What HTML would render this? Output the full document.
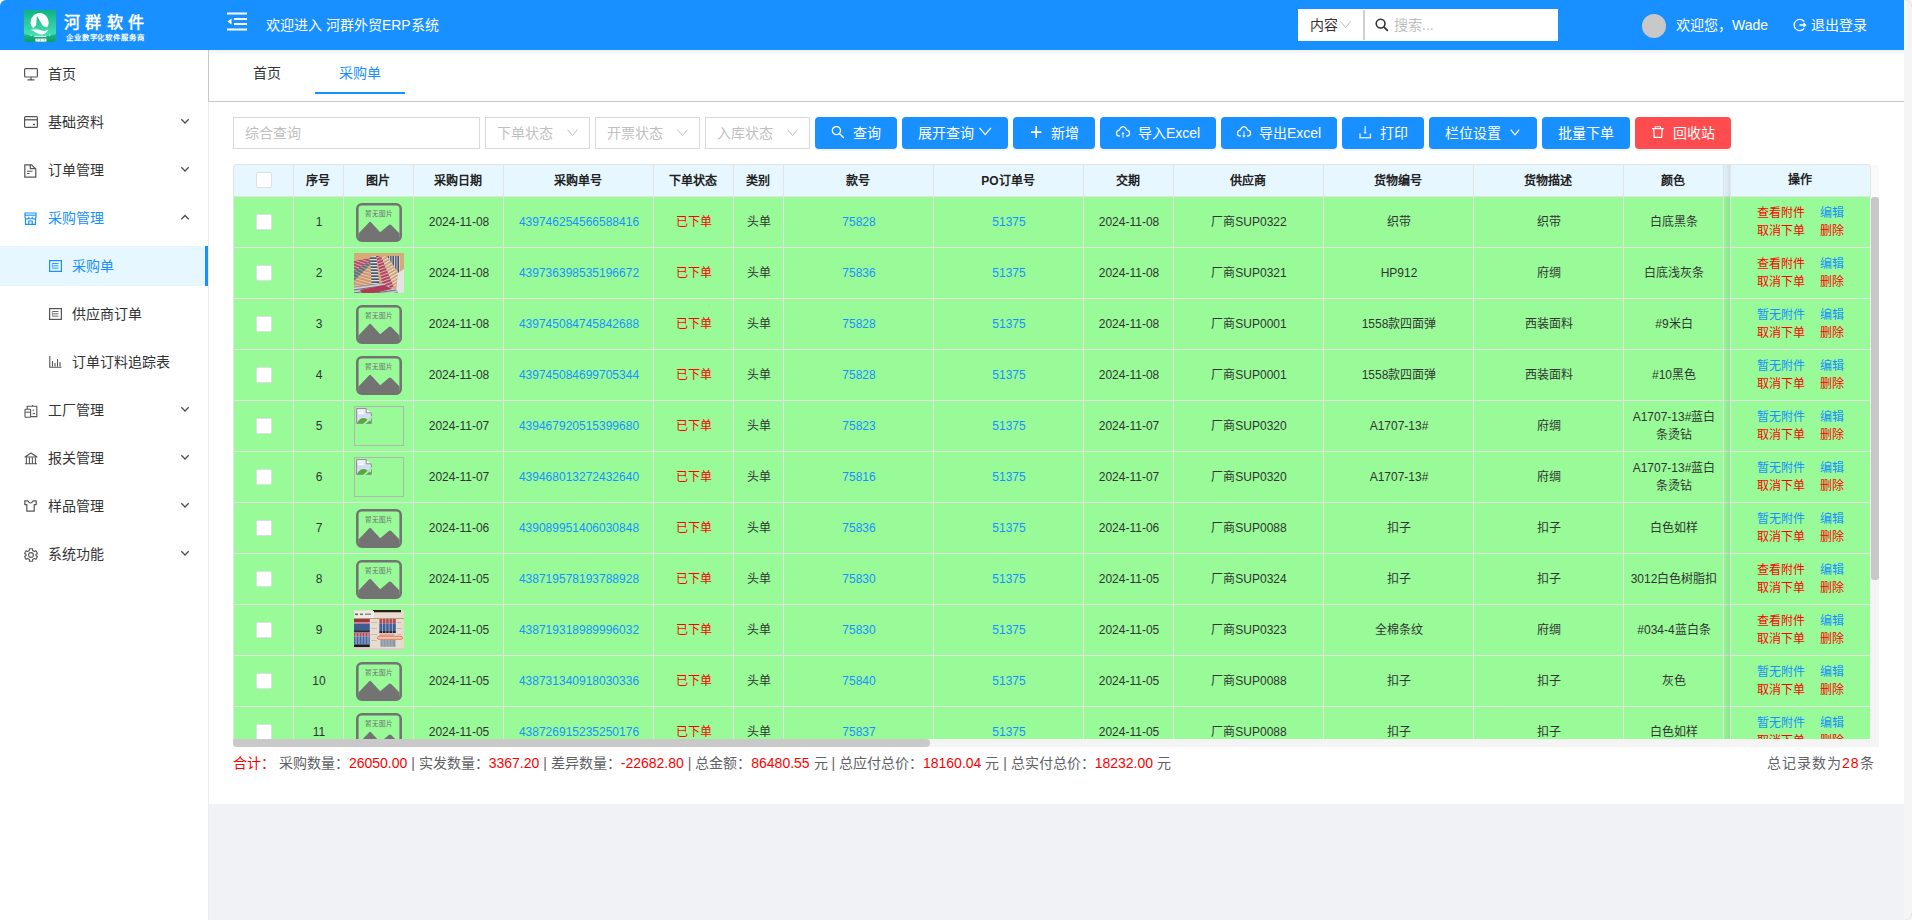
<!DOCTYPE html>
<html lang="zh-CN"><head><meta charset="utf-8"><style>
*{box-sizing:border-box;margin:0;padding:0}
html,body{width:1912px;height:920px;overflow:hidden}
body{position:relative;background:#f5f5f5;font-family:"Liberation Sans",sans-serif;color:#333;font-size:14px}
.a{position:absolute}
.nowrap{white-space:nowrap}
#hdr{left:0;top:0;width:1904px;height:50px;background:#1890ff;border-top-left-radius:6px}
#corner{left:0;top:0;width:8px;height:8px;background:#fdf7ea}
.ht{color:#fff;font-size:14px;line-height:20px;white-space:nowrap}
#side{left:0;top:50px;width:208px;height:870px;background:#fff}
.mi{position:absolute;left:0;width:208px;height:48px}
.mi .t{position:absolute;left:48px;top:14px;line-height:20px;font-size:14px;color:#333;white-space:nowrap}
.mi svg.ic{position:absolute;left:24px;top:18px}
.mi svg.ar{position:absolute;left:180px;top:20px}
#main{left:208px;top:50px;width:1696px;height:870px;background:#f0f2f5;border-left:1px solid #ebebf0}
#tabs{left:208px;top:50px;width:1696px;height:52px;background:#fff;border-left:1px solid #c8c8c8;border-bottom:1px solid #c8c8c8}
#card{left:209px;top:102px;width:1695px;height:702px;background:#fff}
.inp{position:absolute;top:117px;height:32px;border:1px solid #d9d9d9;background:#fff}
.ph{position:absolute;top:5px;left:11px;line-height:20px;font-size:14px;color:#bfbfbf;white-space:nowrap}
.btn{position:absolute;top:117px;height:32px;border-radius:4px;background:#1890ff;color:#fff;font-size:14px;line-height:20px;box-shadow:0 2px 0 rgba(0,0,0,.045)}
.btn .t{position:absolute;top:5.5px;white-space:nowrap}
.btn svg{position:absolute}
.cell{position:absolute;display:flex;align-items:center;justify-content:center;text-align:center;font-size:12px;line-height:18px;color:#333}
.hc{font-weight:bold;color:#222}
.lk{color:#1890ff}
.rd{color:#ff0000}
.vl{position:absolute;width:1px;background:#e3e3e3}
.hl{position:absolute;height:1px;background:#e3e3e3}
.cb{position:absolute;width:16px;height:16px;background:#fff;border:1px solid #dcdfe6;border-radius:2px}
</style></head><body>

<div class="a" id="corner"></div><div class="a" id="hdr"></div>
<div class="a" style="left:1904px;top:0;width:1px;height:50px;background:#fdfbf6"></div>
<svg class="a" style="left:1905px;top:0" width="7" height="920" viewBox="0 0 7 920"><path d="M0.5 0.5 Q6.5 1 6.8 7" fill="none" stroke="#e2e2e2" stroke-width="1"/><path d="M0.5 919.5 Q6.5 919 6.8 913" fill="none" stroke="#e2e2e2" stroke-width="1"/></svg>
<div class="a" style="left:24px;top:10px;width:32px;height:32px;border-radius:1.5px;overflow:hidden">
<svg width="32" height="32" viewBox="0 0 32 32" style="position:absolute;left:0;top:0">
<defs><linearGradient id="lg1" x1="0" y1="0" x2="0" y2="1"><stop offset="0" stop-color="#0fb282"/><stop offset="0.72" stop-color="#3edcb0"/></linearGradient>
<linearGradient id="lg2" x1="0" y1="0" x2="0" y2="1"><stop offset="0" stop-color="#1cb886"/><stop offset="1" stop-color="#0a9e6c"/></linearGradient></defs>
<rect width="32" height="32" fill="url(#lg1)"/>
<path d="M0 24 Q16 29 32 24 V32 H0 Z" fill="url(#lg2)"/>
<g transform="translate(-1.6,-1.2)"><path d="M16.3 4.2 A9.3 9.3 0 0 1 24.6 18.6 L20.5 17.2 L14.5 7 L13.8 16.2 L10.8 19.8 A9.3 9.3 0 0 1 16.3 4.2 Z" fill="#fff"/>
<path d="M8 21 Q14 19.5 19 21.8 Q23 23.2 26 20.5 Q24 26 18.5 25.6 Q14 25.2 11.5 22.5 Q10 21.5 8 21 Z" fill="#fff"/>
<circle cx="8.5" cy="26.3" r="0.6" fill="#fff"/><circle cx="27.3" cy="26.3" r="0.6" fill="#fff"/>
<rect x="12" y="27" width="12" height="1.1" fill="#fff"/><rect x="13" y="29.8" width="11" height="3" fill="#fff"/>
<path d="M14.5 30.5 H16 M18 30.5 V32 M21 31 H22.5" stroke="#0fa070" stroke-width="0.6"/></g>
</svg></div>
<div class="a nowrap" style="left:64px;top:13px;font-size:16px;line-height:20px;color:#fff;font-weight:bold;letter-spacing:5.4px">河群软件</div>
<div class="a nowrap" style="left:66px;top:33px;font-size:7.4px;line-height:10px;color:#fff;font-weight:bold;letter-spacing:0.85px">企业数字化软件服务商</div>
<svg class="a" style="left:227px;top:12px" width="20" height="19" viewBox="0 0 20 19">
<rect x="0" y="0.5" width="20" height="2" fill="#fff"/><rect x="7" y="6" width="13" height="2" fill="#fff"/>
<rect x="7" y="11" width="13" height="2" fill="#fff"/><rect x="0" y="16.5" width="20" height="2" fill="#fff"/>
<path d="M0.5 9.5 L4.5 6.5 V12.5Z" fill="#fff"/></svg>
<div class="a ht" style="left:266px;top:15px">欢迎进入 河群外贸ERP系统</div>
<div class="a" style="left:1298px;top:9px;width:260px;height:32px;background:#fff"></div>
<div class="a" style="left:1363px;top:10px;width:1.5px;height:30px;background:#d0d0d0"></div>
<div class="a nowrap" style="left:1310px;top:15px;font-size:14px;line-height:20px;color:#333">内容</div>
<svg class="a" style="left:1340px;top:21px" width="11" height="8" viewBox="0 0 11 8"><path d="M0.5 0.5 L5.5 6.5 L10.5 0.5" fill="none" stroke="#bbb" stroke-width="1"/></svg>
<svg class="a" style="left:1375px;top:18px" width="14" height="14" viewBox="0 0 14 14"><circle cx="5.6" cy="5.6" r="4.4" fill="none" stroke="#333" stroke-width="1.6"/><path d="M8.8 8.8 L12.8 12.8" stroke="#333" stroke-width="1.8"/></svg>
<div class="a nowrap" style="left:1394px;top:15px;font-size:14px;line-height:20px;color:#bdbdbd">搜索...</div>
<div class="a" style="left:1642px;top:14px;width:24px;height:24px;border-radius:50%;background:#c8c8c8"></div>
<div class="a ht" style="left:1676px;top:15px">欢迎您，Wade</div>
<svg class="a" style="left:1793px;top:18px" width="14" height="14" viewBox="0 0 14 14"><path d="M11.2 3.6 A5.6 5.6 0 1 0 11.2 10.4" fill="none" stroke="#fff" stroke-width="1.3"/><path d="M6.5 7 H12.5 M10.5 5 L12.5 7 L10.5 9" fill="none" stroke="#fff" stroke-width="1.3"/></svg>
<div class="a ht" style="left:1811px;top:15px">退出登录</div>
<div class="a" id="side"></div>
<div class="mi" style="top:50px"><svg class="ic" width="14" height="13" viewBox="0 0 14 13"><rect x="0.6" y="0.6" width="12.8" height="8.4" rx="1" fill="none" stroke="#555" stroke-width="1.2"/><path d="M7 9 V11.3 M3.5 11.8 H10.5" stroke="#555" stroke-width="1.2"/></svg><div class="t" style="color:#333">首页</div></div>
<div class="mi" style="top:98px"><svg class="ic" width="14" height="12" viewBox="0 0 14 12"><rect x="0.6" y="0.6" width="12.8" height="10.8" rx="1" fill="none" stroke="#555" stroke-width="1.2"/><path d="M0.6 3.8 H13.4" stroke="#555" stroke-width="1.3"/><path d="M9 8.5 H11" stroke="#555" stroke-width="1.3"/></svg><div class="t" style="color:#333">基础资料</div><svg class="ar" width="10" height="7" viewBox="0 0 10 7"><path d="M1.3 1.3 L5 5 L8.7 1.3" fill="none" stroke="#505050" stroke-width="1.4"/></svg></div>
<div class="mi" style="top:146px"><svg class="ic" width="13" height="14" viewBox="0 0 13 14"><path d="M0.8 0.8 H7.6 L11.8 5 V13.2 H0.8 Z" fill="none" stroke="#555" stroke-width="1.2"/><path d="M6.3 0.8 V4.6 H11.8" fill="none" stroke="#555" stroke-width="1.2"/><path d="M3 7.3 H8.5 M3 9.5 H5.5" stroke="#555" stroke-width="1.1"/></svg><div class="t" style="color:#333">订单管理</div><svg class="ar" width="10" height="7" viewBox="0 0 10 7"><path d="M1.3 1.3 L5 5 L8.7 1.3" fill="none" stroke="#505050" stroke-width="1.4"/></svg></div>
<div class="mi" style="top:194px"><svg class="ic" width="13" height="13" viewBox="0 0 13 13"><path d="M1 1 H12 V4.5 Q12 7 10 7 Q8.5 7 8.2 5.8 Q7.5 7 6.5 7 Q5.5 7 4.8 5.8 Q4.5 7 3 7 Q1 7 1 4.5 Z" fill="none" stroke="#1890ff" stroke-width="1.2"/><path d="M1 3.2 H12" stroke="#1890ff" stroke-width="1.1"/><path d="M1.5 7 V12.3 H11.5 V7 M4.8 12.3 V9 H8.2 V12.3" fill="none" stroke="#1890ff" stroke-width="1.2"/></svg><div class="t" style="color:#1890ff">采购管理</div><svg class="ar" width="10" height="7" viewBox="0 0 10 7"><path d="M1.3 5.2 L5 1.5 L8.7 5.2" fill="none" stroke="#505050" stroke-width="1.4"/></svg></div>
<div class="mi" style="top:386px"><svg class="ic" width="14" height="14" viewBox="0 0 14 14"><rect x="1" y="5.2" width="5.6" height="8" rx="0.6" fill="none" stroke="#555" stroke-width="1.1"/><path d="M1.5 8.2 H6" stroke="#555" stroke-width="1"/><path d="M3.2 5.2 V2.3 H12.8 V12.6 H6.6" fill="none" stroke="#555" stroke-width="1.1"/><path d="M8.6 1 V2.3" stroke="#555" stroke-width="1.1"/><circle cx="9" cy="6.3" r="0.6" fill="#555"/><path d="M9.8 5 L10.3 6.6 H9.3Z" fill="#555"/><path d="M8.7 9.8 Q10 8.4 11.2 9.8 Z" fill="#555" stroke="#555" stroke-width="0.6"/></svg><div class="t" style="color:#333">工厂管理</div><svg class="ar" width="10" height="7" viewBox="0 0 10 7"><path d="M1.3 1.3 L5 5 L8.7 1.3" fill="none" stroke="#505050" stroke-width="1.4"/></svg></div>
<div class="mi" style="top:434px"><svg class="ic" width="14" height="13" viewBox="0 0 14 13"><path d="M1 5 L7 1 L13 5 Z" fill="none" stroke="#555" stroke-width="1.1" stroke-linejoin="round"/><path d="M2.4 5.5 V11.6 M5.4 5.5 V11.6 M8.4 5.5 V11.6 M11.4 5.5 V11.6 M1 11.8 H13" stroke="#555" stroke-width="1.1"/></svg><div class="t" style="color:#333">报关管理</div><svg class="ar" width="10" height="7" viewBox="0 0 10 7"><path d="M1.3 1.3 L5 5 L8.7 1.3" fill="none" stroke="#505050" stroke-width="1.4"/></svg></div>
<div class="mi" style="top:482px"><svg class="ic" width="13" height="12" viewBox="0 0 13 12"><path d="M0.8 0.8 H3.8 Q5 3 6.5 3 Q8 3 9.2 0.8 H12.2 V4.6 H10.2 V11.2 H2.8 V4.6 H0.8 Z" fill="none" stroke="#555" stroke-width="1.2" stroke-linejoin="round"/></svg><div class="t" style="color:#333">样品管理</div><svg class="ar" width="10" height="7" viewBox="0 0 10 7"><path d="M1.3 1.3 L5 5 L8.7 1.3" fill="none" stroke="#505050" stroke-width="1.4"/></svg></div>
<div class="mi" style="top:530px"><svg class="ic" width="14" height="14" viewBox="0 0 14 14"><path d="M5.4 0.8 H8.6 V2.6 L10.4 3.6 L12 2.7 L13.4 5.5 L11.9 6.5 V7.5 L13.4 8.5 L12 11.3 L10.4 10.4 L8.6 11.4 V13.2 H5.4 V11.4 L3.6 10.4 L2 11.3 L0.6 8.5 L2.1 7.5 V6.5 L0.6 5.5 L2 2.7 L3.6 3.6 L5.4 2.6 Z" fill="none" stroke="#555" stroke-width="1.1" stroke-linejoin="round"/><circle cx="7" cy="7" r="2.4" fill="none" stroke="#555" stroke-width="1.1"/></svg><div class="t" style="color:#333">系统功能</div><svg class="ar" width="10" height="7" viewBox="0 0 10 7"><path d="M1.3 1.3 L5 5 L8.7 1.3" fill="none" stroke="#505050" stroke-width="1.4"/></svg></div>
<div class="a" style="left:0;top:246px;width:208px;height:40px;background:#e6f7ff"></div>
<div class="a" style="left:205px;top:246px;width:3px;height:40px;background:#1890ff"></div>
<div class="mi" style="top:242px"><svg class="ic" style="left:49px;top:18px" width="13" height="12" viewBox="0 0 13 12"><rect x="0.6" y="0.6" width="11.8" height="10.8" fill="none" stroke="#1890ff" stroke-width="1.2"/><path d="M3.5 3.5 H9.5 M3.5 5.8 H9.5 M3.5 8.1 H9.5" stroke="#1890ff" stroke-width="0.9"/><path d="M3.3 3 V8.5" stroke="#1890ff" stroke-width="0.6"/></svg><div class="t" style="left:72px;color:#1890ff">采购单</div></div>
<div class="mi" style="top:290px"><svg class="ic" style="left:49px;top:18px" width="13" height="12" viewBox="0 0 13 12"><rect x="0.6" y="0.6" width="11.8" height="10.8" fill="none" stroke="#555" stroke-width="1.2"/><path d="M3.5 3.5 H9.5 M3.5 5.8 H9.5 M3.5 8.1 H9.5" stroke="#555" stroke-width="0.9"/><path d="M3.3 3 V8.5" stroke="#555" stroke-width="0.6"/></svg><div class="t" style="left:72px;color:#333">供应商订单</div></div>
<div class="mi" style="top:338px"><svg class="ic" style="left:49px;top:18px" width="13" height="12" viewBox="0 0 13 12"><path d="M0.8 0 V11.2 H12.5" fill="none" stroke="#555" stroke-width="1.1"/><path d="M3.5 5 V10.5 M6 7 V10.5 M8.5 3 V10.5 M11 6 V10.5" stroke="#555" stroke-width="1.1"/></svg><div class="t" style="left:72px;color:#333">订单订料追踪表</div></div>
<div class="a" id="main"></div>
<div class="a" id="card"></div>
<div class="a" id="tabs"></div>
<div class="a" style="left:209px;top:50px;width:1695px;height:6px;background:linear-gradient(rgba(0,0,0,.045),rgba(0,0,0,0))"></div>
<div class="a ht" style="left:253px;top:63px;color:#333">首页</div>
<div class="a ht" style="left:339px;top:63px;color:#1890ff">采购单</div>
<div class="a" style="left:315px;top:92px;width:90px;height:2px;background:#1890ff"></div>
<div class="inp" style="left:233px;width:247px"><div class="ph">综合查询</div></div>
<div class="inp" style="left:485px;width:105px"><div class="ph">下单状态</div><svg style="position:absolute;left:81px;top:11px" width="11" height="8" viewBox="0 0 11 8"><path d="M0.6 0.6 L5.5 6.6 L10.4 0.6" fill="none" stroke="#bfbfbf" stroke-width="1"/></svg></div>
<div class="inp" style="left:595px;width:105px"><div class="ph">开票状态</div><svg style="position:absolute;left:81px;top:11px" width="11" height="8" viewBox="0 0 11 8"><path d="M0.6 0.6 L5.5 6.6 L10.4 0.6" fill="none" stroke="#bfbfbf" stroke-width="1"/></svg></div>
<div class="inp" style="left:705px;width:105px"><div class="ph">入库状态</div><svg style="position:absolute;left:81px;top:11px" width="11" height="8" viewBox="0 0 11 8"><path d="M0.6 0.6 L5.5 6.6 L10.4 0.6" fill="none" stroke="#bfbfbf" stroke-width="1"/></svg></div>
<div class="btn" style="left:815px;width:82px;background:#1890ff"><svg style="left:16px;top:9px" width="14" height="14" viewBox="0 0 14 14"><circle cx="5.4" cy="4.6" r="4.1" fill="none" stroke="#fff" stroke-width="1.3"/><path d="M8.4 7.6 L12.4 11.6" stroke="#fff" stroke-width="1.4" stroke-linecap="round"/></svg><span class="t" style="left:38px">查询</span></div>
<div class="btn" style="left:902px;width:106px;background:#1890ff"><svg style="left:76px;top:10px" width="14" height="9" viewBox="0 0 14 9"><path d="M1.5 0.9 L7.2 7.6 L12.9 0.9" fill="none" stroke="#fff" stroke-width="1.3"/></svg><span class="t" style="left:16px">展开查询</span></div>
<div class="btn" style="left:1013px;width:82px;background:#1890ff"><svg style="left:18px;top:9px" width="11" height="13" viewBox="0 0 11 13"><path d="M5.2 0 V12 M0 6.2 H10.4" stroke="#fff" stroke-width="1.7"/></svg><span class="t" style="left:38px">新增</span></div>
<div class="btn" style="left:1100px;width:116px;background:#1890ff"><svg style="left:16px;top:9px" width="15" height="13" viewBox="0 0 15 13"><path d="M3.4 10 Q0.4 10 0.5 7 Q0.7 4.6 3.1 4.2 Q4.8 0.6 7 0.6 Q9.2 0.6 10.9 4.2 Q13.5 4.6 13.5 7 Q13.6 10 10.6 10" fill="none" stroke="#fff" stroke-width="1.3" stroke-linecap="round"/><path d="M7 12 V6.6" stroke="#fff" stroke-opacity="0.65" stroke-width="1.5"/><path d="M5.3 7.9 L7 6.2 L8.7 7.9Z" fill="#fff"/></svg><span class="t" style="left:38px">导入Excel</span></div>
<div class="btn" style="left:1221px;width:116px;background:#1890ff"><svg style="left:16px;top:9px" width="15" height="13" viewBox="0 0 15 13"><path d="M3.4 10 Q0.4 10 0.5 7 Q0.7 4.6 3.1 4.2 Q4.8 0.6 7 0.6 Q9.2 0.6 10.9 4.2 Q13.5 4.6 13.5 7 Q13.6 10 10.6 10" fill="none" stroke="#fff" stroke-width="1.3" stroke-linecap="round"/><path d="M7 5.2 V10" stroke="#fff" stroke-opacity="0.65" stroke-width="1.5"/><path d="M5.2 9.6 L7 11.4 L8.8 9.6Z" fill="#fff"/></svg><span class="t" style="left:38px">导出Excel</span></div>
<div class="btn" style="left:1342px;width:82px;background:#1890ff"><svg style="left:17px;top:9px" width="13" height="13" viewBox="0 0 13 13"><path d="M1 7.6 V11.7 H11.4 V7.6" fill="none" stroke="#fff" stroke-opacity="0.8" stroke-width="1.5"/><path d="M6.2 0 V6.4" stroke="#fff" stroke-opacity="0.65" stroke-width="1.6"/><path d="M4.6 6.3 L6.2 7.9 L7.8 6.3Z" fill="#fff"/></svg><span class="t" style="left:38px">打印</span></div>
<div class="btn" style="left:1429px;width:108px;background:#1890ff"><svg style="left:81px;top:12px" width="10" height="7" viewBox="0 0 10 7"><path d="M0.7 0.7 L5 5.8 L9.3 0.7" fill="none" stroke="#fff" stroke-width="1.2"/></svg><span class="t" style="left:16px">栏位设置</span></div>
<div class="btn" style="left:1542px;width:88px;background:#1890ff"><span class="t" style="left:16px">批量下单</span></div>
<div class="btn" style="left:1635px;width:96px;background:#ff4d4f"><svg style="left:17px;top:9px" width="12" height="13" viewBox="0 0 12 13"><path d="M0 2.6 H11.8" stroke="#fff" stroke-width="1.2"/><path d="M3.2 2.4 V0.8 H8.6 V2.4" fill="none" stroke="#fff" stroke-width="1.1"/><path d="M1.6 2.8 L2.2 11.4 H9.6 L10.2 2.8" fill="none" stroke="#fff" stroke-width="1.3"/></svg><span class="t" style="left:38px">回收站</span></div>
<div class="a" style="left:233px;top:164px;width:1638px;height:33px;background:#e6f7ff;border-top:1px solid #e3e3e3;border-left:1px solid #e3e3e3;border-right:1px solid #e3e3e3;border-radius:4px 4px 0 0"></div>
<div class="a" style="left:1871px;top:165px;width:8px;height:32px;background:#fafafa"></div>
<div class="a" style="left:233px;top:197px;width:1637px;height:542px;background:#98fb98;overflow:hidden" id="tb"></div>
<div class="vl" style="left:293px;top:165px;height:574px"></div>
<div class="vl" style="left:343px;top:165px;height:574px"></div>
<div class="vl" style="left:413px;top:165px;height:574px"></div>
<div class="vl" style="left:503px;top:165px;height:574px"></div>
<div class="vl" style="left:653px;top:165px;height:574px"></div>
<div class="vl" style="left:733px;top:165px;height:574px"></div>
<div class="vl" style="left:783px;top:165px;height:574px"></div>
<div class="vl" style="left:933px;top:165px;height:574px"></div>
<div class="vl" style="left:1083px;top:165px;height:574px"></div>
<div class="vl" style="left:1173px;top:165px;height:574px"></div>
<div class="vl" style="left:1323px;top:165px;height:574px"></div>
<div class="vl" style="left:1473px;top:165px;height:574px"></div>
<div class="vl" style="left:1623px;top:165px;height:574px"></div>
<div class="vl" style="left:1723px;top:165px;height:574px"></div>
<div class="vl" style="left:233px;top:168px;height:571px"></div>
<div class="hl" style="left:233px;top:196px;width:1637px"></div>
<div class="hl" style="left:233px;top:247px;width:1637px"></div>
<div class="hl" style="left:233px;top:298px;width:1637px"></div>
<div class="hl" style="left:233px;top:349px;width:1637px"></div>
<div class="hl" style="left:233px;top:400px;width:1637px"></div>
<div class="hl" style="left:233px;top:451px;width:1637px"></div>
<div class="hl" style="left:233px;top:502px;width:1637px"></div>
<div class="hl" style="left:233px;top:553px;width:1637px"></div>
<div class="hl" style="left:233px;top:604px;width:1637px"></div>
<div class="hl" style="left:233px;top:655px;width:1637px"></div>
<div class="hl" style="left:233px;top:706px;width:1637px"></div>
<div class="cell hc" style="left:293px;top:165px;width:50px;height:32px">序号</div>
<div class="cell hc" style="left:343px;top:165px;width:70px;height:32px">图片</div>
<div class="cell hc" style="left:413px;top:165px;width:90px;height:32px">采购日期</div>
<div class="cell hc" style="left:503px;top:165px;width:150px;height:32px">采购单号</div>
<div class="cell hc" style="left:653px;top:165px;width:80px;height:32px">下单状态</div>
<div class="cell hc" style="left:733px;top:165px;width:50px;height:32px">类别</div>
<div class="cell hc" style="left:783px;top:165px;width:150px;height:32px">款号</div>
<div class="cell hc" style="left:933px;top:165px;width:150px;height:32px">PO订单号</div>
<div class="cell hc" style="left:1083px;top:165px;width:90px;height:32px">交期</div>
<div class="cell hc" style="left:1173px;top:165px;width:150px;height:32px">供应商</div>
<div class="cell hc" style="left:1323px;top:165px;width:150px;height:32px">货物编号</div>
<div class="cell hc" style="left:1473px;top:165px;width:150px;height:32px">货物描述</div>
<div class="cell hc" style="left:1623px;top:165px;width:100px;height:32px">颜色</div>
<div class="cb" style="left:256px;top:172px"></div>
<div class="a" style="left:0;top:0;width:1912px;height:739px;overflow:hidden"><div class="cb" style="left:256px;top:214px"></div><div class="cell " style="left:294px;top:197px;width:50px;height:50px">1</div><div class="a" style="left:356px;top:203px;width:46px;height:39px"><svg width="46" height="39" viewBox="0 0 46 39"><rect x="1.3" y="1.3" width="43.4" height="36.4" rx="4.5" fill="none" stroke="#737373" stroke-width="2.6"/><path d="M2.5 30.5 L13 19.4 Q14.1 18.1 15.2 19.4 L24.2 29.2 L32.8 22 Q34 21 35.2 22.1 L43.5 30.5 V35 Q43.5 37.7 40.8 37.7 H5.2 Q2.5 37.7 2.5 35 Z" fill="#737373"/><text x="23" y="13" font-size="6.5" text-anchor="middle" fill="#707070" font-family="Liberation Sans, sans-serif">暂无图片</text></svg></div><div class="cell " style="left:414px;top:197px;width:90px;height:50px">2024-11-08</div><div class="cell lk" style="left:504px;top:197px;width:150px;height:50px">439746254566588416</div><div class="cell rd" style="left:654px;top:197px;width:80px;height:50px">已下单</div><div class="cell " style="left:734px;top:197px;width:50px;height:50px">头单</div><div class="cell lk" style="left:784px;top:197px;width:150px;height:50px">75828</div><div class="cell lk" style="left:934px;top:197px;width:150px;height:50px">51375</div><div class="cell " style="left:1084px;top:197px;width:90px;height:50px">2024-11-08</div><div class="cell " style="left:1174px;top:197px;width:150px;height:50px">厂商SUP0322</div><div class="cell " style="left:1324px;top:197px;width:150px;height:50px">织带</div><div class="cell " style="left:1474px;top:197px;width:150px;height:50px">织带</div><div class="cell " style="left:1624px;top:197px;width:100px;height:50px">白底黑条</div><div class="a" style="left:1757px;top:204px;line-height:18px;font-size:12px;white-space:nowrap"><span class="rd">查看附件</span><br><span class="rd">取消下单</span></div><div class="a" style="left:1820px;top:204px;line-height:18px;font-size:12px;white-space:nowrap"><span class="lk">编辑</span><br><span class="rd">删除</span></div><div class="cb" style="left:256px;top:265px"></div><div class="cell " style="left:294px;top:248px;width:50px;height:50px">2</div><div class="a" style="left:354px;top:253px;width:50px;height:40px"><svg width="50" height="40" viewBox="0 0 50 40"><defs>
<pattern id="sR" width="3" height="3" patternUnits="userSpaceOnUse" patternTransform="rotate(20)"><rect width="3" height="3" fill="#b24d66"/><rect width="3" height="1" fill="#dba8b2"/></pattern>
<pattern id="sG" width="3" height="3" patternUnits="userSpaceOnUse" patternTransform="rotate(25)"><rect width="3" height="3" fill="#5f6a70"/><rect width="3" height="1.2" fill="#9aa2a4"/></pattern>
<pattern id="sT" width="3" height="3" patternUnits="userSpaceOnUse" patternTransform="rotate(15)"><rect width="3" height="3" fill="#c9916c"/><rect width="3" height="1.2" fill="#e8c9a8"/></pattern>
<pattern id="sN" width="3" height="3" patternUnits="userSpaceOnUse"><rect width="3" height="3" fill="#4e5668"/><rect width="3" height="1.3" fill="#e0e0e0"/></pattern>
<pattern id="sW" width="3" height="3" patternUnits="userSpaceOnUse" patternTransform="rotate(-20)"><rect width="3" height="3" fill="#b0445e"/><rect width="3" height="1" fill="#e0b0bc"/></pattern>
<pattern id="sB" width="3" height="3" patternUnits="userSpaceOnUse" patternTransform="rotate(-30)"><rect width="3" height="3" fill="#c49a72"/><rect width="3" height="1.3" fill="#f2e2cc"/></pattern>
<pattern id="sP" width="3" height="3" patternUnits="userSpaceOnUse" patternTransform="rotate(-8)"><rect width="3" height="3" fill="#d6d4d6"/><rect width="3" height="1.2" fill="#6a707c"/></pattern>
<pattern id="sV" width="2.5" height="3" patternUnits="userSpaceOnUse"><rect width="2.5" height="3" fill="#4a5064"/><rect width="1" height="3" fill="#d8d8dc"/></pattern>
</defs><filter id="bl1"><feGaussianBlur stdDeviation="0.45"/></filter><g filter="url(#bl1)"><rect x="-2" y="-2" width="54" height="44" fill="#d7ab78"/>
<path d="M25 3 L0 8 L0 22 Z" fill="url(#sR)"/><path d="M25 3 L0 18 L0 32 Z" fill="url(#sG)"/>
<path d="M25 3 L0 28 L2 36 L20 36 Z" fill="url(#sT)"/><path d="M16 4 L22 3 L26 36 L18 36 Z" fill="url(#sN)"/>
<path d="M22 3 L27 3 L40 34 L30 38 Z" fill="url(#sW)"/><path d="M27 3 L34 4 L48 26 L40 34 Z" fill="url(#sB)"/>
<path d="M33 3 L46 3 L46 22 Z" fill="url(#sV)"/><path d="M44 20 L50 16 L50 40 L42 40 Z" fill="#e4e2e4"/>
<path d="M0 34 L28 30 L44 38 L44 40 L0 40 Z" fill="url(#sP)"/><path d="M6 37 L30 32 L38 36 L20 40 L8 40 Z" fill="#b03a56"/></g>
</svg></div><div class="cell " style="left:414px;top:248px;width:90px;height:50px">2024-11-08</div><div class="cell lk" style="left:504px;top:248px;width:150px;height:50px">439736398535196672</div><div class="cell rd" style="left:654px;top:248px;width:80px;height:50px">已下单</div><div class="cell " style="left:734px;top:248px;width:50px;height:50px">头单</div><div class="cell lk" style="left:784px;top:248px;width:150px;height:50px">75836</div><div class="cell lk" style="left:934px;top:248px;width:150px;height:50px">51375</div><div class="cell " style="left:1084px;top:248px;width:90px;height:50px">2024-11-08</div><div class="cell " style="left:1174px;top:248px;width:150px;height:50px">厂商SUP0321</div><div class="cell " style="left:1324px;top:248px;width:150px;height:50px">HP912</div><div class="cell " style="left:1474px;top:248px;width:150px;height:50px">府绸</div><div class="cell " style="left:1624px;top:248px;width:100px;height:50px">白底浅灰条</div><div class="a" style="left:1757px;top:255px;line-height:18px;font-size:12px;white-space:nowrap"><span class="rd">查看附件</span><br><span class="rd">取消下单</span></div><div class="a" style="left:1820px;top:255px;line-height:18px;font-size:12px;white-space:nowrap"><span class="lk">编辑</span><br><span class="rd">删除</span></div><div class="cb" style="left:256px;top:316px"></div><div class="cell " style="left:294px;top:299px;width:50px;height:50px">3</div><div class="a" style="left:356px;top:305px;width:46px;height:39px"><svg width="46" height="39" viewBox="0 0 46 39"><rect x="1.3" y="1.3" width="43.4" height="36.4" rx="4.5" fill="none" stroke="#737373" stroke-width="2.6"/><path d="M2.5 30.5 L13 19.4 Q14.1 18.1 15.2 19.4 L24.2 29.2 L32.8 22 Q34 21 35.2 22.1 L43.5 30.5 V35 Q43.5 37.7 40.8 37.7 H5.2 Q2.5 37.7 2.5 35 Z" fill="#737373"/><text x="23" y="13" font-size="6.5" text-anchor="middle" fill="#707070" font-family="Liberation Sans, sans-serif">暂无图片</text></svg></div><div class="cell " style="left:414px;top:299px;width:90px;height:50px">2024-11-08</div><div class="cell lk" style="left:504px;top:299px;width:150px;height:50px">439745084745842688</div><div class="cell rd" style="left:654px;top:299px;width:80px;height:50px">已下单</div><div class="cell " style="left:734px;top:299px;width:50px;height:50px">头单</div><div class="cell lk" style="left:784px;top:299px;width:150px;height:50px">75828</div><div class="cell lk" style="left:934px;top:299px;width:150px;height:50px">51375</div><div class="cell " style="left:1084px;top:299px;width:90px;height:50px">2024-11-08</div><div class="cell " style="left:1174px;top:299px;width:150px;height:50px">厂商SUP0001</div><div class="cell " style="left:1324px;top:299px;width:150px;height:50px">1558款四面弹</div><div class="cell " style="left:1474px;top:299px;width:150px;height:50px">西装面料</div><div class="cell " style="left:1624px;top:299px;width:100px;height:50px">#9米白</div><div class="a" style="left:1757px;top:306px;line-height:18px;font-size:12px;white-space:nowrap"><span class="lk">暂无附件</span><br><span class="rd">取消下单</span></div><div class="a" style="left:1820px;top:306px;line-height:18px;font-size:12px;white-space:nowrap"><span class="lk">编辑</span><br><span class="rd">删除</span></div><div class="cb" style="left:256px;top:367px"></div><div class="cell " style="left:294px;top:350px;width:50px;height:50px">4</div><div class="a" style="left:356px;top:356px;width:46px;height:39px"><svg width="46" height="39" viewBox="0 0 46 39"><rect x="1.3" y="1.3" width="43.4" height="36.4" rx="4.5" fill="none" stroke="#737373" stroke-width="2.6"/><path d="M2.5 30.5 L13 19.4 Q14.1 18.1 15.2 19.4 L24.2 29.2 L32.8 22 Q34 21 35.2 22.1 L43.5 30.5 V35 Q43.5 37.7 40.8 37.7 H5.2 Q2.5 37.7 2.5 35 Z" fill="#737373"/><text x="23" y="13" font-size="6.5" text-anchor="middle" fill="#707070" font-family="Liberation Sans, sans-serif">暂无图片</text></svg></div><div class="cell " style="left:414px;top:350px;width:90px;height:50px">2024-11-08</div><div class="cell lk" style="left:504px;top:350px;width:150px;height:50px">439745084699705344</div><div class="cell rd" style="left:654px;top:350px;width:80px;height:50px">已下单</div><div class="cell " style="left:734px;top:350px;width:50px;height:50px">头单</div><div class="cell lk" style="left:784px;top:350px;width:150px;height:50px">75828</div><div class="cell lk" style="left:934px;top:350px;width:150px;height:50px">51375</div><div class="cell " style="left:1084px;top:350px;width:90px;height:50px">2024-11-08</div><div class="cell " style="left:1174px;top:350px;width:150px;height:50px">厂商SUP0001</div><div class="cell " style="left:1324px;top:350px;width:150px;height:50px">1558款四面弹</div><div class="cell " style="left:1474px;top:350px;width:150px;height:50px">西装面料</div><div class="cell " style="left:1624px;top:350px;width:100px;height:50px">#10黑色</div><div class="a" style="left:1757px;top:357px;line-height:18px;font-size:12px;white-space:nowrap"><span class="lk">暂无附件</span><br><span class="rd">取消下单</span></div><div class="a" style="left:1820px;top:357px;line-height:18px;font-size:12px;white-space:nowrap"><span class="lk">编辑</span><br><span class="rd">删除</span></div><div class="cb" style="left:256px;top:418px"></div><div class="cell " style="left:294px;top:401px;width:50px;height:50px">5</div><div class="a" style="left:354px;top:406px;width:50px;height:40px;border:1px solid #b4b4b4"><svg width="17" height="17" viewBox="0 0 17 17" style="position:absolute;left:1px;top:1px"><defs><linearGradient id="bg1" x1="0" y1="0" x2="0" y2="1"><stop offset="0" stop-color="#f4f7fd"/><stop offset="0.5" stop-color="#cfdcf4"/><stop offset="1" stop-color="#dfe6f8"/></linearGradient></defs><path d="M0.6 0.6 H10.2 L15.4 5.8 V15.4 H0.6 Z" fill="url(#bg1)" stroke="#8a8a8a" stroke-width="1"/><path d="M10.2 0.6 V4.8 H15.4" fill="#fff" stroke="#8a8a8a" stroke-width="1"/><path d="M2.2 6 Q2.6 4.6 4.2 4.8 Q5.2 3.4 6.8 4.2 Q7.6 4.6 7.8 6 Z" fill="#fff"/><path d="M1 15 Q3.6 10 7.6 10 Q10.4 10.2 11.8 12 L9 15 Z" fill="#5aa83a"/><path d="M10.6 15 L13.8 12.2 Q14.6 13.2 15 14.2 V15 Z" fill="#5aa83a"/><path d="M7.8 16.4 L16.4 8.4" stroke="#98fb98" stroke-width="1.6"/></svg></div><div class="cell " style="left:414px;top:401px;width:90px;height:50px">2024-11-07</div><div class="cell lk" style="left:504px;top:401px;width:150px;height:50px">439467920515399680</div><div class="cell rd" style="left:654px;top:401px;width:80px;height:50px">已下单</div><div class="cell " style="left:734px;top:401px;width:50px;height:50px">头单</div><div class="cell lk" style="left:784px;top:401px;width:150px;height:50px">75823</div><div class="cell lk" style="left:934px;top:401px;width:150px;height:50px">51375</div><div class="cell " style="left:1084px;top:401px;width:90px;height:50px">2024-11-07</div><div class="cell " style="left:1174px;top:401px;width:150px;height:50px">厂商SUP0320</div><div class="cell " style="left:1324px;top:401px;width:150px;height:50px">A1707-13#</div><div class="cell " style="left:1474px;top:401px;width:150px;height:50px">府绸</div><div class="cell " style="left:1624px;top:401px;width:100px;height:50px">A1707-13#蓝白<br>条烫钻</div><div class="a" style="left:1757px;top:408px;line-height:18px;font-size:12px;white-space:nowrap"><span class="lk">暂无附件</span><br><span class="rd">取消下单</span></div><div class="a" style="left:1820px;top:408px;line-height:18px;font-size:12px;white-space:nowrap"><span class="lk">编辑</span><br><span class="rd">删除</span></div><div class="cb" style="left:256px;top:469px"></div><div class="cell " style="left:294px;top:452px;width:50px;height:50px">6</div><div class="a" style="left:354px;top:457px;width:50px;height:40px;border:1px solid #b4b4b4"><svg width="17" height="17" viewBox="0 0 17 17" style="position:absolute;left:1px;top:1px"><defs><linearGradient id="bg1" x1="0" y1="0" x2="0" y2="1"><stop offset="0" stop-color="#f4f7fd"/><stop offset="0.5" stop-color="#cfdcf4"/><stop offset="1" stop-color="#dfe6f8"/></linearGradient></defs><path d="M0.6 0.6 H10.2 L15.4 5.8 V15.4 H0.6 Z" fill="url(#bg1)" stroke="#8a8a8a" stroke-width="1"/><path d="M10.2 0.6 V4.8 H15.4" fill="#fff" stroke="#8a8a8a" stroke-width="1"/><path d="M2.2 6 Q2.6 4.6 4.2 4.8 Q5.2 3.4 6.8 4.2 Q7.6 4.6 7.8 6 Z" fill="#fff"/><path d="M1 15 Q3.6 10 7.6 10 Q10.4 10.2 11.8 12 L9 15 Z" fill="#5aa83a"/><path d="M10.6 15 L13.8 12.2 Q14.6 13.2 15 14.2 V15 Z" fill="#5aa83a"/><path d="M7.8 16.4 L16.4 8.4" stroke="#98fb98" stroke-width="1.6"/></svg></div><div class="cell " style="left:414px;top:452px;width:90px;height:50px">2024-11-07</div><div class="cell lk" style="left:504px;top:452px;width:150px;height:50px">439468013272432640</div><div class="cell rd" style="left:654px;top:452px;width:80px;height:50px">已下单</div><div class="cell " style="left:734px;top:452px;width:50px;height:50px">头单</div><div class="cell lk" style="left:784px;top:452px;width:150px;height:50px">75816</div><div class="cell lk" style="left:934px;top:452px;width:150px;height:50px">51375</div><div class="cell " style="left:1084px;top:452px;width:90px;height:50px">2024-11-07</div><div class="cell " style="left:1174px;top:452px;width:150px;height:50px">厂商SUP0320</div><div class="cell " style="left:1324px;top:452px;width:150px;height:50px">A1707-13#</div><div class="cell " style="left:1474px;top:452px;width:150px;height:50px">府绸</div><div class="cell " style="left:1624px;top:452px;width:100px;height:50px">A1707-13#蓝白<br>条烫钻</div><div class="a" style="left:1757px;top:459px;line-height:18px;font-size:12px;white-space:nowrap"><span class="lk">暂无附件</span><br><span class="rd">取消下单</span></div><div class="a" style="left:1820px;top:459px;line-height:18px;font-size:12px;white-space:nowrap"><span class="lk">编辑</span><br><span class="rd">删除</span></div><div class="cb" style="left:256px;top:520px"></div><div class="cell " style="left:294px;top:503px;width:50px;height:50px">7</div><div class="a" style="left:356px;top:509px;width:46px;height:39px"><svg width="46" height="39" viewBox="0 0 46 39"><rect x="1.3" y="1.3" width="43.4" height="36.4" rx="4.5" fill="none" stroke="#737373" stroke-width="2.6"/><path d="M2.5 30.5 L13 19.4 Q14.1 18.1 15.2 19.4 L24.2 29.2 L32.8 22 Q34 21 35.2 22.1 L43.5 30.5 V35 Q43.5 37.7 40.8 37.7 H5.2 Q2.5 37.7 2.5 35 Z" fill="#737373"/><text x="23" y="13" font-size="6.5" text-anchor="middle" fill="#707070" font-family="Liberation Sans, sans-serif">暂无图片</text></svg></div><div class="cell " style="left:414px;top:503px;width:90px;height:50px">2024-11-06</div><div class="cell lk" style="left:504px;top:503px;width:150px;height:50px">439089951406030848</div><div class="cell rd" style="left:654px;top:503px;width:80px;height:50px">已下单</div><div class="cell " style="left:734px;top:503px;width:50px;height:50px">头单</div><div class="cell lk" style="left:784px;top:503px;width:150px;height:50px">75836</div><div class="cell lk" style="left:934px;top:503px;width:150px;height:50px">51375</div><div class="cell " style="left:1084px;top:503px;width:90px;height:50px">2024-11-06</div><div class="cell " style="left:1174px;top:503px;width:150px;height:50px">厂商SUP0088</div><div class="cell " style="left:1324px;top:503px;width:150px;height:50px">扣子</div><div class="cell " style="left:1474px;top:503px;width:150px;height:50px">扣子</div><div class="cell " style="left:1624px;top:503px;width:100px;height:50px">白色如样</div><div class="a" style="left:1757px;top:510px;line-height:18px;font-size:12px;white-space:nowrap"><span class="lk">暂无附件</span><br><span class="rd">取消下单</span></div><div class="a" style="left:1820px;top:510px;line-height:18px;font-size:12px;white-space:nowrap"><span class="lk">编辑</span><br><span class="rd">删除</span></div><div class="cb" style="left:256px;top:571px"></div><div class="cell " style="left:294px;top:554px;width:50px;height:50px">8</div><div class="a" style="left:356px;top:560px;width:46px;height:39px"><svg width="46" height="39" viewBox="0 0 46 39"><rect x="1.3" y="1.3" width="43.4" height="36.4" rx="4.5" fill="none" stroke="#737373" stroke-width="2.6"/><path d="M2.5 30.5 L13 19.4 Q14.1 18.1 15.2 19.4 L24.2 29.2 L32.8 22 Q34 21 35.2 22.1 L43.5 30.5 V35 Q43.5 37.7 40.8 37.7 H5.2 Q2.5 37.7 2.5 35 Z" fill="#737373"/><text x="23" y="13" font-size="6.5" text-anchor="middle" fill="#707070" font-family="Liberation Sans, sans-serif">暂无图片</text></svg></div><div class="cell " style="left:414px;top:554px;width:90px;height:50px">2024-11-05</div><div class="cell lk" style="left:504px;top:554px;width:150px;height:50px">438719578193788928</div><div class="cell rd" style="left:654px;top:554px;width:80px;height:50px">已下单</div><div class="cell " style="left:734px;top:554px;width:50px;height:50px">头单</div><div class="cell lk" style="left:784px;top:554px;width:150px;height:50px">75830</div><div class="cell lk" style="left:934px;top:554px;width:150px;height:50px">51375</div><div class="cell " style="left:1084px;top:554px;width:90px;height:50px">2024-11-05</div><div class="cell " style="left:1174px;top:554px;width:150px;height:50px">厂商SUP0324</div><div class="cell " style="left:1324px;top:554px;width:150px;height:50px">扣子</div><div class="cell " style="left:1474px;top:554px;width:150px;height:50px">扣子</div><div class="cell " style="left:1624px;top:554px;width:100px;height:50px">3012白色树脂扣</div><div class="a" style="left:1757px;top:561px;line-height:18px;font-size:12px;white-space:nowrap"><span class="rd">查看附件</span><br><span class="rd">取消下单</span></div><div class="a" style="left:1820px;top:561px;line-height:18px;font-size:12px;white-space:nowrap"><span class="lk">编辑</span><br><span class="rd">删除</span></div><div class="cb" style="left:256px;top:622px"></div><div class="cell " style="left:294px;top:605px;width:50px;height:50px">9</div><div class="a" style="left:354px;top:610px;width:50px;height:40px"><svg width="50" height="40" viewBox="0 0 50 40"><filter id="bl2" x="-5%" y="-5%" width="110%" height="110%"><feGaussianBlur stdDeviation="0.5"/></filter><g filter="url(#bl2)">
<rect x="-1" y="-1" width="52" height="42" fill="#e6ddd0"/>
<path d="M18 -1 H51 V3 L46 2.2 H20 Z" fill="#2a1d1a"/><rect x="47" y="0" width="4" height="40" fill="#e9d8c6"/>
<rect x="0" y="1" width="20" height="7" fill="#eeeae6"/><rect x="1" y="3.5" width="3" height="1.6" fill="#6a6660"/><rect x="6" y="3.5" width="3" height="1.6" fill="#7a7670"/><rect x="11" y="3.5" width="6" height="1.4" fill="#8a8680"/>
<rect x="0" y="8" width="50" height="0.8" fill="#a88c58"/>
<rect x="0" y="9" width="15.8" height="3" fill="#98363f"/><rect x="0" y="12" width="15.8" height="1.6" fill="#d98092"/>
<rect x="0" y="13.6" width="15.8" height="7.4" fill="#3f5c8e"/><rect x="0" y="20.5" width="15.8" height="2" fill="#2c3038"/>
<rect x="0" y="23" width="15.8" height="3.5" fill="#b84a5c"/><rect x="0" y="26.5" width="15.8" height="8" fill="#4466a0"/>
<path d="M2 23 V34 M5 23 V34 M8 23 V34 M11 23 V34 M14 23 V34" stroke="#d8dce6" stroke-width="0.7"/>
<rect x="0" y="34.5" width="15.8" height="2.6" fill="#1a1a1a"/>
<rect x="25.4" y="9" width="16.4" height="4.6" fill="#b4485a"/><rect x="25.4" y="13.6" width="16.4" height="7.4" fill="#3e5e98"/>
<rect x="25.4" y="21" width="16.4" height="2" fill="#23272e"/>
<path d="M28.5 9 V23 M31.8 9 V23 M35.1 9 V23 M38.4 9 V23" stroke="#e6ddd0" stroke-width="0.6"/>
<rect x="25.4" y="23.5" width="15" height="2.5" fill="#e2a9a8"/>
<rect x="23.5" y="26.3" width="25" height="3" rx="1.5" fill="#f0c8b0" stroke="#e06a40" stroke-width="0.8"/>
<rect x="26.5" y="29.8" width="15" height="7" fill="#8c98a2"/><path d="M29 30 V37 M32 30 V37 M35 30 V37 M38 30 V37" stroke="#c8ccd0" stroke-width="0.6"/>
<rect x="17" y="12" width="6" height="0.8" fill="#c0b8ac"/><rect x="17" y="18" width="6" height="0.8" fill="#c0b8ac"/><rect x="17" y="24" width="6" height="0.8" fill="#c0b8ac"/><rect x="17" y="30" width="6" height="0.8" fill="#c0b8ac"/>
<rect x="43" y="12" width="4" height="0.8" fill="#b8b0a4"/><rect x="43" y="18" width="4" height="0.8" fill="#b8b0a4"/><rect x="43" y="24" width="4" height="0.8" fill="#b8b0a4"/>
<rect x="0" y="38" width="50" height="2" fill="#d6cfc6"/></g></svg></div><div class="cell " style="left:414px;top:605px;width:90px;height:50px">2024-11-05</div><div class="cell lk" style="left:504px;top:605px;width:150px;height:50px">438719318989996032</div><div class="cell rd" style="left:654px;top:605px;width:80px;height:50px">已下单</div><div class="cell " style="left:734px;top:605px;width:50px;height:50px">头单</div><div class="cell lk" style="left:784px;top:605px;width:150px;height:50px">75830</div><div class="cell lk" style="left:934px;top:605px;width:150px;height:50px">51375</div><div class="cell " style="left:1084px;top:605px;width:90px;height:50px">2024-11-05</div><div class="cell " style="left:1174px;top:605px;width:150px;height:50px">厂商SUP0323</div><div class="cell " style="left:1324px;top:605px;width:150px;height:50px">全棉条纹</div><div class="cell " style="left:1474px;top:605px;width:150px;height:50px">府绸</div><div class="cell " style="left:1624px;top:605px;width:100px;height:50px">#034-4蓝白条</div><div class="a" style="left:1757px;top:612px;line-height:18px;font-size:12px;white-space:nowrap"><span class="rd">查看附件</span><br><span class="rd">取消下单</span></div><div class="a" style="left:1820px;top:612px;line-height:18px;font-size:12px;white-space:nowrap"><span class="lk">编辑</span><br><span class="rd">删除</span></div><div class="cb" style="left:256px;top:673px"></div><div class="cell " style="left:294px;top:656px;width:50px;height:50px">10</div><div class="a" style="left:356px;top:662px;width:46px;height:39px"><svg width="46" height="39" viewBox="0 0 46 39"><rect x="1.3" y="1.3" width="43.4" height="36.4" rx="4.5" fill="none" stroke="#737373" stroke-width="2.6"/><path d="M2.5 30.5 L13 19.4 Q14.1 18.1 15.2 19.4 L24.2 29.2 L32.8 22 Q34 21 35.2 22.1 L43.5 30.5 V35 Q43.5 37.7 40.8 37.7 H5.2 Q2.5 37.7 2.5 35 Z" fill="#737373"/><text x="23" y="13" font-size="6.5" text-anchor="middle" fill="#707070" font-family="Liberation Sans, sans-serif">暂无图片</text></svg></div><div class="cell " style="left:414px;top:656px;width:90px;height:50px">2024-11-05</div><div class="cell lk" style="left:504px;top:656px;width:150px;height:50px">438731340918030336</div><div class="cell rd" style="left:654px;top:656px;width:80px;height:50px">已下单</div><div class="cell " style="left:734px;top:656px;width:50px;height:50px">头单</div><div class="cell lk" style="left:784px;top:656px;width:150px;height:50px">75840</div><div class="cell lk" style="left:934px;top:656px;width:150px;height:50px">51375</div><div class="cell " style="left:1084px;top:656px;width:90px;height:50px">2024-11-05</div><div class="cell " style="left:1174px;top:656px;width:150px;height:50px">厂商SUP0088</div><div class="cell " style="left:1324px;top:656px;width:150px;height:50px">扣子</div><div class="cell " style="left:1474px;top:656px;width:150px;height:50px">扣子</div><div class="cell " style="left:1624px;top:656px;width:100px;height:50px">灰色</div><div class="a" style="left:1757px;top:663px;line-height:18px;font-size:12px;white-space:nowrap"><span class="lk">暂无附件</span><br><span class="rd">取消下单</span></div><div class="a" style="left:1820px;top:663px;line-height:18px;font-size:12px;white-space:nowrap"><span class="lk">编辑</span><br><span class="rd">删除</span></div><div class="cb" style="left:256px;top:724px"></div><div class="cell " style="left:294px;top:707px;width:50px;height:50px">11</div><div class="a" style="left:356px;top:713px;width:46px;height:39px"><svg width="46" height="39" viewBox="0 0 46 39"><rect x="1.3" y="1.3" width="43.4" height="36.4" rx="4.5" fill="none" stroke="#737373" stroke-width="2.6"/><path d="M2.5 30.5 L13 19.4 Q14.1 18.1 15.2 19.4 L24.2 29.2 L32.8 22 Q34 21 35.2 22.1 L43.5 30.5 V35 Q43.5 37.7 40.8 37.7 H5.2 Q2.5 37.7 2.5 35 Z" fill="#737373"/><text x="23" y="13" font-size="6.5" text-anchor="middle" fill="#707070" font-family="Liberation Sans, sans-serif">暂无图片</text></svg></div><div class="cell " style="left:414px;top:707px;width:90px;height:50px">2024-11-05</div><div class="cell lk" style="left:504px;top:707px;width:150px;height:50px">438726915235250176</div><div class="cell rd" style="left:654px;top:707px;width:80px;height:50px">已下单</div><div class="cell " style="left:734px;top:707px;width:50px;height:50px">头单</div><div class="cell lk" style="left:784px;top:707px;width:150px;height:50px">75837</div><div class="cell lk" style="left:934px;top:707px;width:150px;height:50px">51375</div><div class="cell " style="left:1084px;top:707px;width:90px;height:50px">2024-11-05</div><div class="cell " style="left:1174px;top:707px;width:150px;height:50px">厂商SUP0088</div><div class="cell " style="left:1324px;top:707px;width:150px;height:50px">扣子</div><div class="cell " style="left:1474px;top:707px;width:150px;height:50px">扣子</div><div class="cell " style="left:1624px;top:707px;width:100px;height:50px">白色如样</div><div class="a" style="left:1757px;top:714px;line-height:18px;font-size:12px;white-space:nowrap"><span class="lk">暂无附件</span><br><span class="rd">取消下单</span></div><div class="a" style="left:1820px;top:714px;line-height:18px;font-size:12px;white-space:nowrap"><span class="lk">编辑</span><br><span class="rd">删除</span></div></div>
<div class="a" style="left:1722px;top:165px;width:8px;height:574px;background:linear-gradient(90deg,rgba(0,0,0,0),rgba(0,0,0,.09))"></div>
<div class="vl" style="left:1730px;top:165px;height:574px"></div>
<div class="cell hc" style="left:1730px;top:165px;width:140px;height:30px">操作</div>
<div class="a" style="left:1870px;top:197px;width:9px;height:550px;background:#f4f4f4"></div>
<div class="a" style="left:1871px;top:197px;width:8px;height:383px;background:#c8c8c8;border-radius:3px"></div>
<div class="a" style="left:233px;top:739px;width:1646px;height:8px;background:#f4f4f4"></div>
<div class="a" style="left:233px;top:739px;width:697px;height:8px;background:#c9c9c9;border-radius:0 4px 4px 4px"></div>
<div class="a nowrap" style="left:233px;top:753px;font-size:14px;line-height:20px;color:#606266"><span class="rd">合计：</span>&nbsp;采购数量：<span class="rd">26050.00</span> | 实发数量：<span class="rd">3367.20</span> | 差异数量：<span class="rd">-22682.80</span> | 总金额：<span class="rd">86480.55</span> 元 | 总应付总价：<span class="rd">18160.04</span> 元 | 总实付总价：<span class="rd">18232.00</span> 元</div>
<div class="a nowrap" style="left:1767px;top:753px;font-size:14px;line-height:20px;color:#606266;letter-spacing:1px">总记录数为<span class="rd">28</span>条</div>
</body></html>
